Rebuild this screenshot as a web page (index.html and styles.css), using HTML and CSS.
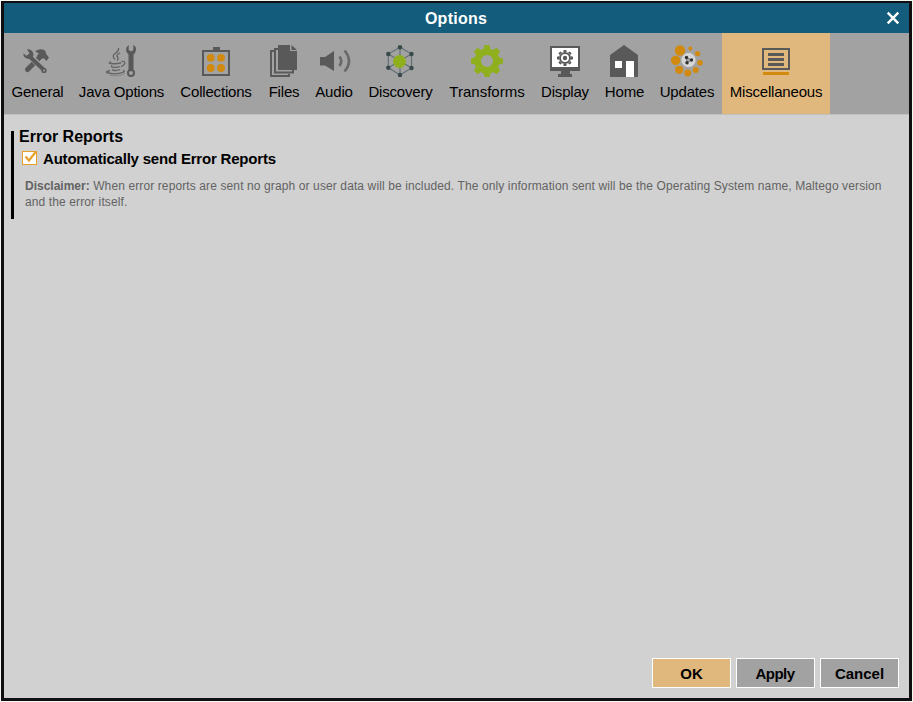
FILE: index.html
```html
<!DOCTYPE html>
<html lang="en">
<head>
<meta charset="utf-8">
<title>Options</title>
<link rel="stylesheet" href="styles.css">
</head>
<body>
<div class="dialog">
  <header class="titlebar">
    <h1 class="title">Options</h1>
    <svg class="close" viewBox="0 0 14 14"><path d="M1.700 1.700L12.300 12.300M12.300 1.700L1.700 12.300"/></svg>
  </header>
  <nav class="toolbar">
    <div class="tab general">
      <svg viewBox="4 33 67 50">
        <path class="line w5" d="M27.500 69.500L39 58"/>
        <path class="dark" d="M35 51.500Q40 47.500 45 50.500L46.500 54.500L49 57.500L46.500 61L43.500 58L41 59.500L37 55.500L39 53.500Z"/>
        <path class="gap" d="M30 56L44 70"/>
        <path class="line w4" d="M29 56L44 70"/>
        <path class="dark" d="M27 49.300A5.500 5.500 0 0 1 33 57A5.500 5.500 0 0 1 23.300 53.500L27 56L29.500 53.500Z"/>
        <circle class="dark" cx="44" cy="70.500" r="2.600"/><circle class="hole" cx="44" cy="70.500" r="1"/>
      </svg><span>General</span>
    </div>
    <div class="tab java">
      <svg viewBox="71 33 101 50">
        <path class="line w1" d="M118.500 48Q119 51 115 53.500Q111.500 56 115 59.500M120 53Q115.500 55 117.500 57Q119 59 117 60.500M111 61.500Q107.500 63 111 63.500Q116 64.200 121 63M121.500 61.500Q126 61 124.500 64Q123.500 66 121 66.500M112 65.500Q110.500 67 113 67.200Q117 67.700 120 66.500M113 69Q112 70.500 115 70.500Q118 70.500 120 69.500M110 70.500Q104 72 108 73Q116 75 124 72Q125 71 123 70.500"/>
        <path class="light" d="M110 75.500Q120 76.500 125 73.500"/>
        <path class="dark" d="M128.700 45V50L131 51.500L133.300 50V45Q136.500 46.500 136 50Q135.500 53 133.500 54.500V70H128.500V54.500Q126 52.500 126 49.500Q126.200 46.500 128.700 45Z"/>
        <circle class="line w2" cx="131" cy="73" r="3"/>
      </svg><span>Java Options</span>
    </div>
    <div class="tab collections">
      <svg viewBox="172 33 88 50">
        <rect class="line w2" x="203" y="51" width="26" height="24"/><path class="dark" d="M213 47h7v3h-7z"/>
        <g class="orange"><circle cx="210.700" cy="57.800" r="3.900"/><circle cx="221" cy="57.800" r="3.900"/><circle cx="210.700" cy="68" r="3.900"/><circle cx="221" cy="68" r="3.900"/></g>
      </svg><span>Collections</span>
    </div>
    <div class="tab files">
      <svg viewBox="260 33 48 50">
        <path class="line w2" d="M274 51H271V76H289V74M278 49H275V72.500H293V70"/>
        <path class="dark" d="M278 45H290V51H297V70H278ZM291.500 45L297 50H291.500Z"/>
      </svg><span>Files</span>
    </div>
    <div class="tab audio">
      <svg viewBox="308 33 52 50">
        <path class="dark" d="M320 57h5l9-6v20l-9-5.500h-5z"/>
        <path class="arc" d="M339.500 56.500Q343 61 339.500 66M344.500 50.500Q353.500 61 344.500 71.500"/>
      </svg><span>Audio</span>
    </div>
    <div class="tab discovery">
      <svg viewBox="360 33 81 50">
        <path class="net" d="M400 47.300L388.300 54V67.700L400 75L411.500 68V54ZV75M388.300 54L411.500 68M388.300 67.700L411.500 54"/>
        <g class="node"><circle cx="400" cy="47.300" r="2.200"/><circle cx="388.300" cy="54" r="2.200"/><circle cx="388.300" cy="67.700" r="2.200"/><circle cx="400" cy="75" r="2.200"/><circle cx="411.500" cy="68" r="2.200"/><circle cx="411.500" cy="54" r="2.200"/></g>
        <circle class="green" cx="399.500" cy="61.500" r="6.500"/>
      </svg><span>Discovery</span>
    </div>
    <div class="tab transforms">
      <svg viewBox="441 33 92 50">
        <circle class="ring" cx="487" cy="61" r="9.300"/>
        <g class="green" transform="translate(487 61)"><path id="teeth" d="M-3.400-12L-2.600-16H2.600L3.400-12ZM-3.400 12L-2.600 16H2.600L3.400 12ZM-12-3.400L-16-2.600V2.600L-12 3.400ZM12-3.400L16-2.600V2.600L12 3.400Z"/><use href="#teeth" transform="rotate(45)"/></g>
      </svg><span>Transforms</span>
    </div>
    <div class="tab display">
      <svg viewBox="533 33 64 50">
        <path class="dark" d="M550 46h30v25h-10v3h2v3h-14v-3h3v-3h-11z"/><path class="white" d="M552 48h26v19h-26z"/>
        <g transform="translate(565 58)"><circle class="line w2" r="5"/><circle class="dark" r="2.200"/><g class="dark" transform="scale(.5)"><use href="#teeth"/><use href="#teeth" transform="rotate(45)"/></g></g>
      </svg><span>Display</span>
    </div>
    <div class="tab home">
      <svg viewBox="597 33 55 50">
        <path class="dark" d="M610 55L624 45L638 55V77H610Z"/><path class="white" d="M615 61h7v7h-7zM626 61h8v16h-8z"/>
      </svg><span>Home</span>
    </div>
    <div class="tab updates">
      <svg viewBox="652 33 70 50">
        <g class="orange"><circle cx="680" cy="50.500" r="5.200"/><circle cx="690.300" cy="48.500" r="2"/><circle cx="697.600" cy="53.600" r="2.600"/><circle cx="700" cy="62.700" r="2.800"/><circle cx="695.700" cy="70" r="3"/><circle cx="687.700" cy="73" r="3.400"/><circle cx="679.200" cy="69.800" r="4.100"/><circle cx="675.600" cy="60.400" r="4.700"/></g>
        <circle class="globe" cx="688.500" cy="60" r="6.600"/>
        <path class="spokes" d="M686.500 57.500L691.500 60L687 62.800Z"/>
        <g class="seeds"><circle cx="686.500" cy="57.500" r="1.700"/><circle cx="691.500" cy="60" r="1.700"/><circle cx="687" cy="62.800" r="1.700"/></g>
      </svg><span>Updates</span>
    </div>
    <div class="tab misc selected">
      <svg viewBox="722 33 108 50">
        <rect class="line w2" x="763" y="49" width="26" height="20"/>
        <path class="dark" d="M768 53h16v3h-16zM768 58h16v3h-16zM768 63h16v3h-16z"/><path class="orange" d="M763 72h26v3h-26z"/>
      </svg><span>Miscellaneous</span>
    </div>
  </nav>
  <main class="content">
    <section class="group">
      <h2 class="heading">Error Reports</h2>
      <label class="option">
        <svg class="check" viewBox="0 0 16 16"><rect x=".5" y=".5" width="14" height="13"/><path d="M3.500 5.500L7 9.500L14 .5"/></svg>
        <span>Automatically send Error Reports</span>
      </label>
      <p class="note"><b>Disclaimer:</b> When error reports are sent no graph or user data will be included. The only information sent will be the Operating System name, Maltego version<br>and the error itself.</p>
    </section>
  </main>
  <footer class="actions">
    <button class="button primary">OK</button>
    <button class="button apply">Apply</button>
    <button class="button">Cancel</button>
  </footer>
</div>
</body>
</html>
```
FILE: styles.css
```css
* { box-sizing: border-box; margin: 0; }
body {
  height: 702px;
  padding: 1px;
  overflow: hidden;
  background: #f2f7f2;
  font-family: "Liberation Sans", Arial, sans-serif;
  color: #000;
}
.dialog {
  display: flex;
  flex-direction: column;
  width: 911px;
  height: 700px;
  border: 3px solid #110e12;
  border-top-width: 2px;
  background: #d1d1d1;
}
.titlebar {
  display: flex;
  align-items: center;
  height: 30px;
  padding: 0 9px 0 23px;
  background: #135c7c;
  color: #fff;
}
.title { flex: 1; padding: 2px 1px 0 0; font-size: 16px; line-height: 28px; letter-spacing: .25px; text-align: center; }
.close { width: 14px; height: 14px; stroke: #fff; stroke-width: 2.4; }
.toolbar {
  display: flex;
  height: 82px;
  background: #a2a2a2;
  border-bottom: 1px solid #c0c0c0;
}
.tab { display: flex; flex-direction: column; align-items: center; height: 81px; font-size: 15px; line-height: 18px; letter-spacing: -.19px; white-space: nowrap; }
.tab svg { display: block; width: 100%; height: 50px; flex: none; }
.general { width: 67px; }
.java { width: 101px; }
.collections { width: 88px; }
.files { width: 48px; }
.audio { width: 52px; }
.discovery { width: 81px; }
.transforms { width: 92px; letter-spacing: 0; }
.display { width: 64px; }
.home { width: 55px; }
.updates { width: 70px; }
.misc { width: 108px; }
.selected { background: #e0b87e; }
.dark { fill: #595959; }
.line { fill: none; stroke: #595959; }
.w1 { stroke: #636363; stroke-width: 1.3; }
.w2 { stroke-width: 2; }
.w4 { stroke-width: 4; stroke-linecap: round; }
.w5 { stroke-width: 5; stroke-linecap: round; }
.gap { stroke: #a2a2a2; stroke-width: 6; }
.hole { fill: #a2a2a2; }
.light { fill: none; stroke: #858585; }
.arc { fill: none; stroke: #686868; stroke-width: 2.6; }
.orange { fill: #d18a0d; }
.green { fill: #8fb01c; }
.ring { fill: none; stroke: #8fb01c; stroke-width: 6.6; }
.net { fill: none; stroke: #607174; stroke-width: 1.2; }
.node { fill: #38494c; }
.white { fill: #fff; }
.globe { fill: #d5d5d5; stroke: #ddd; }
.spokes { fill: #aaa; stroke: #777; }
.seeds { fill: #303030; }
.content { flex: 1; padding: 16px 7px 0; }
.group { display: flow-root; height: 88px; padding: 0 0 0 5px; border-left: 3px solid #000; }
.heading { margin-top: -3px; font-size: 16px; line-height: 18px; }
.option { display: flex; gap: 5px; margin-top: 4px; padding-left: 3px; font-size: 15px; font-weight: bold; line-height: 18px; letter-spacing: -.2px; }
.check { width: 16px; height: 16px; margin-top: 1px; fill: #fff; stroke: #e8a02c; }
.check path { fill: none; stroke-width: 2.2; }
.note { margin-top: 10px; padding-left: 6px; font-size: 12px; line-height: 16px; letter-spacing: .113px; color: #636363; white-space: nowrap; }
.note b { letter-spacing: 0; }
.actions { display: flex; justify-content: flex-end; gap: 5px; padding: 0 10px 10px; }
.button {
  width: 79px;
  height: 30px;
  padding: 0;
  border: 1px solid #fff;
  background: #a2a2a2;
  font: bold 15px "Liberation Sans", Arial, sans-serif;
}
.apply { padding-right: 1px; letter-spacing: -.5px; }
.primary { background: #e0b87e; }
```
